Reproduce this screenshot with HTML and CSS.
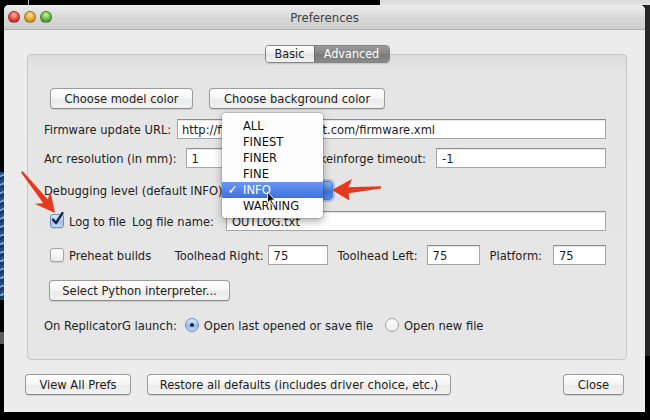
FILE: index.html
```html
<!DOCTYPE html>
<html>
<head>
<meta charset="utf-8">
<title>Preferences</title>
<link rel="stylesheet" href="styles.css">
</head>
<body>
<div class="screen">
  <div class="window">
    <div class="titlebar">
      <div class="lights"><span class="light red"></span><span class="light yellow"></span><span class="light green"></span></div>
      <div class="title">Preferences</div>
      <div></div>
    </div>
    <div class="content">
      <div class="tabs"><span class="tab basic">Basic</span><span class="tab advanced">Advanced</span></div>
      <div class="panel">
        <div class="row r1">
          <button class="btn w-model">Choose model color</button>
          <button class="btn w-bg">Choose background color</button>
        </div>
        <div class="row r2">
          <span>Firmware update URL:</span>
          <input class="field f-url" value="http://firmware.makerbot.com/firmware.xml" readonly>
        </div>
        <div class="row r3">
          <span>Arc resolution (in mm):</span>
          <input class="field f-arc" value="1" readonly>
          <span class="push">Skeinforge timeout:</span>
          <input class="field f-skein" value="-1" readonly>
        </div>
        <div class="row r4">
          <span>Debugging level (default INFO):</span>
          <span class="combo"></span>
        </div>
        <div class="row r5">
          <span class="check on"><svg viewBox="0 0 14 14" width="14" height="14"><path d="M3 6.5 L6 10 L12.5 0" fill="none" stroke="#1b2a4c" stroke-width="2.4" stroke-linecap="round" stroke-linejoin="round"/></svg></span>
          <span class="cb-label">Log to file</span>
          <span class="lbl-log">Log file name:</span>
          <input class="field f-log" value="OUTLOG.txt" readonly>
        </div>
        <div class="row r6">
          <span class="check"></span>
          <span class="cb-label">Preheat builds</span>
          <span class="push">Toolhead Right:</span>
          <input class="field f-tr" value="75" readonly>
          <span class="lbl-tl">Toolhead Left:</span>
          <input class="field f-tl" value="75" readonly>
          <span class="lbl-pf">Platform:</span>
          <input class="field f-pf" value="75" readonly>
        </div>
        <div class="row r7">
          <button class="btn w-py">Select Python interpreter...</button>
        </div>
        <div class="row r8">
          <span>On ReplicatorG launch:</span>
          <label class="opt first"><span class="radio on"></span>Open last opened or save file</label>
          <label class="opt second"><span class="radio"></span>Open new file</label>
        </div>
      </div>
      <div class="footer">
        <button class="btn w-view">View All Prefs</button>
        <button class="btn w-restore">Restore all defaults (includes driver choice, etc.)</button>
        <button class="btn w-close">Close</button>
      </div>
    </div>
    <ul class="menu">
      <li><span class="mk"></span>ALL</li>
      <li><span class="mk"></span>FINEST</li>
      <li><span class="mk"></span>FINER</li>
      <li><span class="mk"></span>FINE</li>
      <li class="hi"><span class="mk">✓</span>INFO</li>
      <li><span class="mk"></span>WARNING</li>
    </ul>
  </div>
  <svg class="marks" viewBox="0 0 650 420" width="650" height="420">
    <polygon fill="#e53a1e" points="55,213 50.3,191.1 47.9,199.4 22.6,171 21,172.4 43.3,203.2 34.7,203.7"/>
    <polygon fill="#e53a1e" points="332,190 352,179 348.5,187.2 381,186.2 381,188.4 348.5,193.2 349.5,200.5"/>
    <path d="M267.5 192 L267.5 203 L270 200.6 L272 205 L273.6 204.2 L271.7 200 L275 200 Z" fill="#111" stroke="#fff" stroke-width="0.9" stroke-linejoin="round"/>
  </svg>
</div>
</body>
</html>
```
FILE: styles.css
```css
* { box-sizing: border-box; }
html, body { margin: 0; padding: 0; }
body {
  width: 650px;
  height: 420px;
  overflow: hidden;
  font-family: "DejaVu Sans", "Liberation Sans", sans-serif;
  font-stretch: condensed;
  font-size: 12.8px;
  color: #1d1d1d;
}
.screen {
  position: relative;
  width: 650px;
  height: 420px;
  padding: 5px 0 0 4px;
  background:
    linear-gradient(#d9d9d9, #e4e4e4) 380px 0 / 270px 5px no-repeat,
    linear-gradient(#bbb, #bbb) 28px 0 / 1px 5px no-repeat,
    repeating-linear-gradient(160deg, #1f4f86 0 3px, #6fa0cf 3px 5px, #163b66 5px 8px) 0 172px / 4px 128px no-repeat,
    linear-gradient(#5a5a5a, #5a5a5a) 0 332px / 4px 12px no-repeat,
    linear-gradient(#262626, #262626) 645px 0 / 5px 356px no-repeat,
    #000;
}
.window {
  position: relative;
  width: 641px;
  height: 407px;
  background: #ececec;
  border-radius: 5px 5px 0 0;
  display: flex;
  flex-direction: column;
}
.titlebar {
  height: 25px;
  display: grid;
  grid-template-columns: 1fr auto 1fr;
  align-items: center;
  background: linear-gradient(#ececec, #d6d6d6 60%, #cdcdcd);
  border-bottom: 1px solid #b0b0b0;
  border-radius: 5px 5px 0 0;
}
.lights { display: flex; gap: 4px; padding-left: 4px; }
.light {
  width: 12px;
  height: 12px;
  border-radius: 50%;
  border: 1px solid rgba(0, 0, 0, 0.28);
}
.red { background: radial-gradient(circle at 50% 30%, #ffb3ab, #e3463e 55%, #a82820); }
.yellow { background: radial-gradient(circle at 50% 30%, #ffe49a, #e3a52a 55%, #a8731a); }
.green { background: radial-gradient(circle at 50% 30%, #c9f5a4, #5fb83c 55%, #3b7f21); }
.title { font-size: 13px; color: #404040; }

.content {
  flex: 1;
  display: flex;
  flex-direction: column;
  padding: 15px 18px 17px 23px;
}
.tabs {
  position: relative;
  z-index: 1;
  align-self: center;
  display: flex;
  height: 18px;
  border: 1px solid #858585;
  border-radius: 4px;
  overflow: hidden;
  box-shadow: 0 1px 1px rgba(0, 0, 0, 0.12);
  font-size: 12.5px;
}
.tab { line-height: 16px; text-align: center; }
.basic { width: 48px; background: linear-gradient(#ffffff, #eeeeee 50%, #e4e4e4 51%, #f2f2f2); }
.advanced {
  width: 75px;
  color: #fff;
  border-left: 1px solid #6a6a6a;
  background: linear-gradient(#9a9a9a, #848484 50%, #787878 51%, #8a8a8a);
}
.panel {
  height: 306px;
  margin-top: -9px;
  border: 1px solid #c6c6c6;
  border-radius: 4px;
  background: linear-gradient(#dcdcdc, #e5e5e5 16px, #e6e6e6);
  padding: 33px 20px 25px 16px;
  display: flex;
  flex-direction: column;
}
.row { display: flex; align-items: center; height: 20px; white-space: nowrap; }
.r1 { height: 21px; }
.r2 { margin-top: 10px; }
.r3 { margin-top: 9px; }
.r4 { margin-top: 12px; }
.r5 { margin-top: 11px; }
.r6 { margin-top: 14px; }
.r7 { margin-top: 15px; height: 21px; }
.r8 { margin-top: 15px; height: 18px; }

.btn {
  height: 21px;
  padding: 0;
  font: inherit;
  color: #1d1d1d;
  border: 1px solid #9c9c9c;
  border-bottom-color: #8a8a8a;
  border-radius: 4px;
  background: linear-gradient(#ffffff, #f4f4f4 50%, #e9e9e9 51%, #f3f3f3);
  box-shadow: 0 1px 1px rgba(0, 0, 0, 0.12);
  text-align: center;
  white-space: nowrap;
}
.w-model { width: 143px; margin-left: 6px; }
.w-bg { width: 176px; margin-left: 16px; }
.w-py { width: 181px; margin-left: 5px; }
.w-view { width: 106px; }
.w-restore { width: 304px; margin-left: 16px; }
.w-close { width: 61px; margin-left: auto; }

.field {
  height: 20px;
  padding: 0 5px;
  font: inherit;
  color: #1d1d1d;
  background: #fff;
  border: 1px solid #a6a6a6;
  border-top-color: #8c8c8c;
  box-shadow: inset 0 1px 1px rgba(0, 0, 0, 0.1);
  border-radius: 0;
  outline: none;
}
.f-url { width: 429px; margin-left: auto; padding-left: 4px; }
.f-arc { width: 113px; margin-left: 9px; }
.push { margin-left: auto; }
.f-skein { width: 170px; margin-left: 10px; }
.f-log { width: 380px; margin-left: auto; }
.f-tr { width: 60px; margin-left: 4px; }
.f-tl { width: 53px; margin-left: 9px; }
.f-pf { width: 53px; margin-left: 11px; }
.lbl-tl { margin-left: 10px; }
.lbl-pf { margin-left: 10px; }

.combo {
  width: 105px;
  height: 19px;
  margin-left: 2px;
  border: 1px solid #4c7bd2;
  border-radius: 4px;
  background: linear-gradient(#8db2f2, #4f80e0 50%, #3c6fd9 51%, #5b8ae4);
  box-shadow: 0 0 0 2px rgba(110, 160, 240, 0.55);
}

.check {
  width: 14px;
  height: 14px;
  margin-left: 6px;
  border: 1px solid #a2a2a2;
  border-radius: 3px;
  background: linear-gradient(#ffffff, #ececec);
  box-shadow: 0 1px 1px rgba(0, 0, 0, 0.1);
  display: flex;
}
.check svg { display: block; margin: -2px 0 0 -1px; overflow: visible; }
.check.on {
  border-color: #6a8cbc;
  background: linear-gradient(#dbe8fa, #b0cdf2 50%, #97bcee 51%, #c4dbf7);
}
.cb-label { margin-left: 5px; }
.lbl-log { margin-left: 6px; }

.opt { display: flex; align-items: center; gap: 5px; }
.opt.first { margin-left: 8px; }
.opt.second { margin-left: 12px; }
.radio {
  width: 14px;
  height: 14px;
  border-radius: 50%;
  border: 1px solid #a2a2a2;
  background: linear-gradient(#ffffff, #ebebeb);
  display: grid;
  place-items: center;
}
.radio.on {
  border-color: #6a8cbc;
  background: linear-gradient(#dbe8fa, #a6c6f0 50%, #90b7ec 51%, #c4dbf7);
}
.radio.on::after {
  content: "";
  width: 4px;
  height: 4px;
  border-radius: 50%;
  background: #17223d;
}

.footer { display: flex; height: 21px; margin: 14px 3px 0 -2px; }

.menu {
  position: absolute;
  left: 218px;
  top: 108px;
  width: 101px;
  margin: 0;
  padding: 5px 0 4px;
  list-style: none;
  background: #fdfdfd;
  border-radius: 4px;
  box-shadow: 0 3px 9px rgba(0, 0, 0, 0.35), 0 0 0 1px rgba(0, 0, 0, 0.12);
  z-index: 5;
}
.menu li {
  display: grid;
  grid-template-columns: 21px 1fr;
  height: 16px;
  line-height: 16px;
  color: #111;
}
.menu .mk { text-align: center; }
.menu li.hi {
  color: #fff;
  background: linear-gradient(#6b97f1, #3e71e0);
}
.marks {
  position: absolute;
  left: 0;
  top: 0;
  pointer-events: none;
  z-index: 10;
}
```
